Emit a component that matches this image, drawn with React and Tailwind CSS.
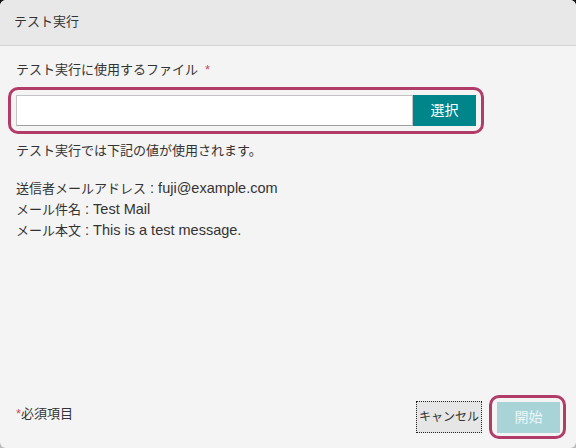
export default function App() {
  const font = { fontFamily: '"Liberation Sans", "Noto Sans CJK JP", sans-serif' };
  return (
    <div className="w-[576px] h-[448px] bg-gradient-to-b from-[#111] to-[#bbb]" style={font}>
      <div className="w-[576px] h-[448px] rounded-[6px] overflow-hidden bg-[#f4f4f4] flex flex-col text-[#333] text-[13px]">
        <div className="h-[46px] bg-[#e8e8e8] border-b border-[#d3d3d3] flex items-center pl-[14px] pb-[1px] shrink-0">
          <span className="text-[13px] leading-[20px]">テスト実行</span>
        </div>
        <div className="flex flex-col pl-[16px] pt-[14px]">
          <div className="leading-[20px]">
            テスト実行に使用するファイル<span className="text-[#c0506a] ml-[7px]">*</span>
          </div>
          <div className="mt-[7px] ml-[-8px] w-[476px] border-[3px] border-[#b23c68] rounded-[10px] p-[5px] flex">
            <div className="flex-1 h-[31px] bg-white border border-[#c4c4c4] border-b-[#a0a0a0]"></div>
            <button className="w-[63px] h-[31px] bg-[#00868a] text-white text-[14px] flex items-center justify-center">選択</button>
          </div>
          <div className="mt-[7px] leading-[20px]">テスト実行では下記の値が使用されます。</div>
          <div className="mt-[17px] leading-[20px]">
            <div>送信者メールアドレス<span className="text-[14.5px]"> : fuji@example.com</span></div>
            <div>メール件名<span className="text-[14.5px]"> : Test Mail</span></div>
            <div>メール本文<span className="text-[14.5px]"> : This is a test message.</span></div>
          </div>
        </div>
        <div className="flex-1"></div>
        <div className="flex items-center justify-between pl-[16px] pr-[10px] pb-[9px]">
          <div className="leading-[20px] mb-[7px]">
            <span className="text-[#c0506a]">*</span>必須項目
          </div>
          <div className="flex items-center">
            <button className="w-[66px] h-[32px] px-0 bg-[#e6e6e6] border border-dotted border-[#222] text-[12px] text-[#333] whitespace-nowrap flex items-center justify-center">キャンセル</button>
            <div className="ml-[7px] border-[3px] border-[#b23c68] rounded-[10px] pl-[5px] pr-[3px] pt-[4px] pb-[3px]">
              <button className="w-[63px] h-[31px] bg-[#a8d4d7] text-[#eaf6f7] text-[14px] flex items-center justify-center">開始</button>
            </div>
          </div>
        </div>
      </div>
    </div>
  );
}
